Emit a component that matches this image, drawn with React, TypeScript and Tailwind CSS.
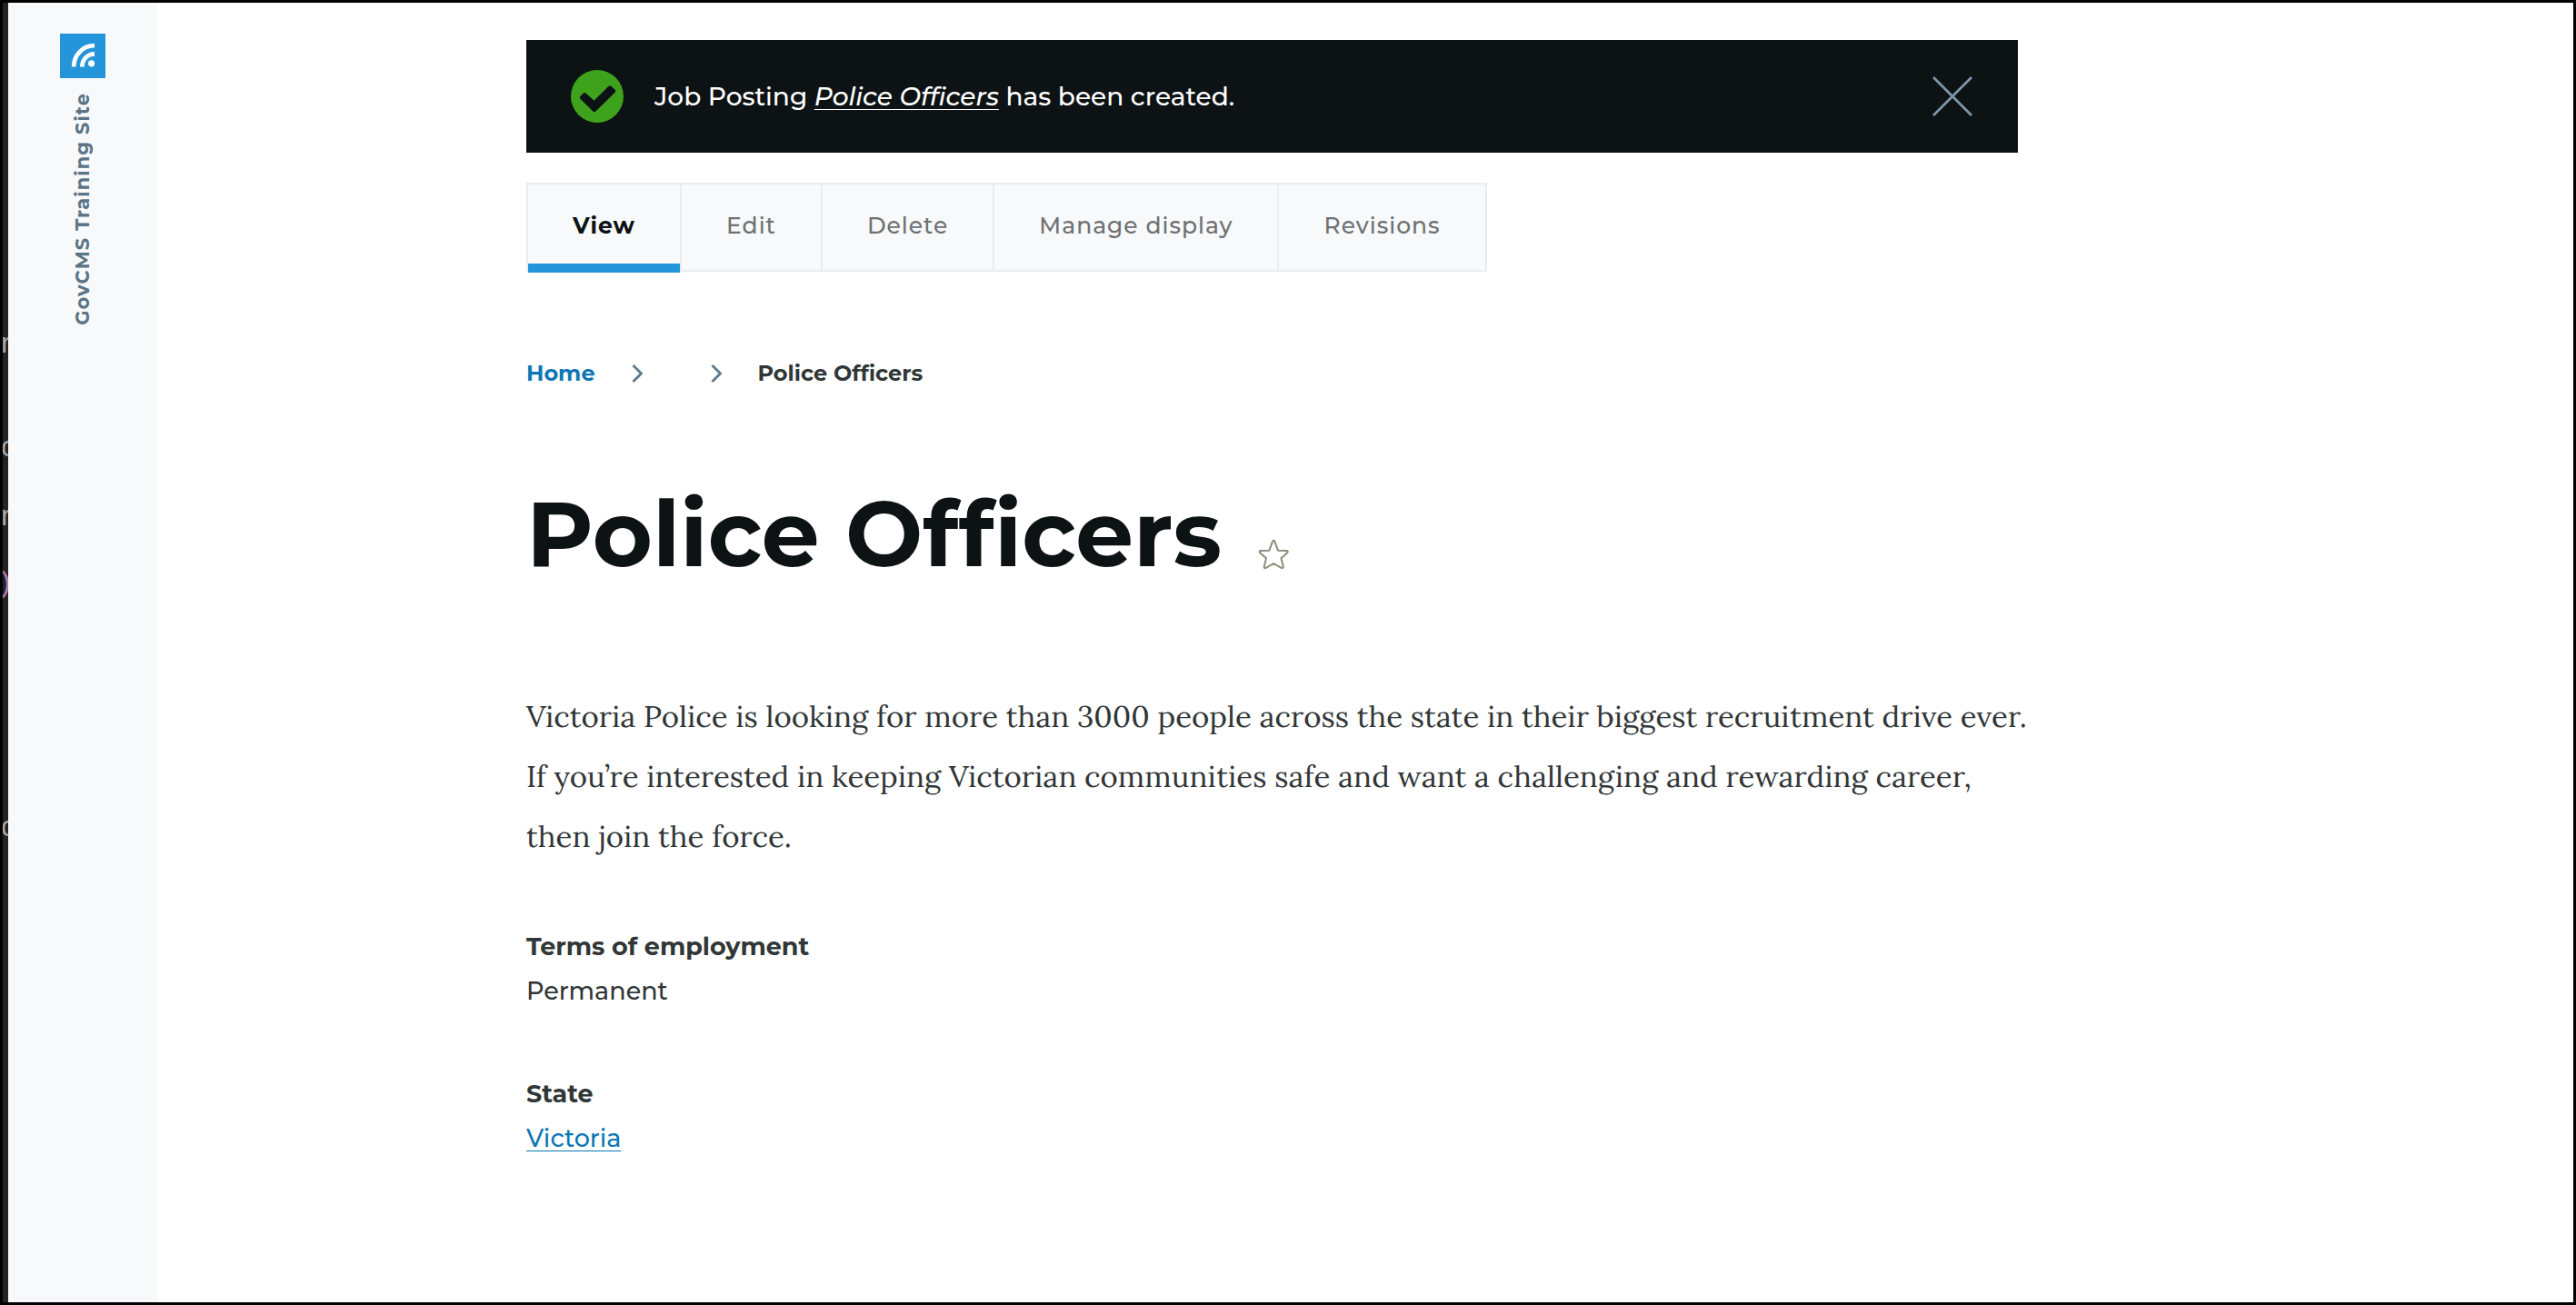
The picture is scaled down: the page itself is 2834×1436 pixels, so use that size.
import { useState } from 'react';

const tabs = ['View', 'Edit', 'Delete', 'Manage display', 'Revisions'];

function Chevron() {
  return (
    <svg aria-hidden="true" className="h-5 w-3 shrink-0" viewBox="0 0 12 20" fill="none" stroke="#5c7a8c" strokeWidth="2.8">
      <path d="M1.5 1 10.5 10 1.5 19" />
    </svg>
  );
}

function CheckBadge() {
  return (
    <svg aria-hidden="true" className="size-[58px] shrink-0" viewBox="0 0 58 58">
      <circle cx="29" cy="29" r="29" fill="#3fa21c" />
      <path
        d="M11.8 30.4 15.2 27 25.6 36.4 43 19.3 47.2 23.2 25.7 44.2Z"
        fill="#0d1214"
        stroke="#0d1214"
        strokeWidth="4"
        strokeLinejoin="round"
      />
    </svg>
  );
}

function Logo() {
  return (
    <svg aria-hidden="true" className="h-[49px] w-[50px]" viewBox="0 0 50 49" fill="none">
      <rect width="50" height="49" fill="#2494db" />
      <path d="M15.2 36.4V36A22.8 22.8 0 0 1 38 13.2" stroke="#fff" strokeWidth="4.8" />
      <path d="M24.4 36.4V36A13.6 13.6 0 0 1 38 22.4" stroke="#fff" strokeWidth="4.8" />
      <circle cx="34.6" cy="32.8" r="3.6" fill="#fff" />
    </svg>
  );
}

function Message({ onClose }: { onClose: () => void }) {
  return (
    <div role="status" className="flex min-h-[124px] items-center bg-[#0d1214] pr-[50px] pl-[49px] text-white">
      <CheckBadge />
      <p className="ml-[34px] grow text-[28px] leading-[48px]">
        Job Posting{' '}
        <a href="#police-officers" className="italic underline decoration-1 underline-offset-[4px]">
          Police Officers
        </a>{' '}
        has been created.
      </p>
      <button type="button" aria-label="Close message" onClick={onClose} className="cursor-pointer">
        <svg className="size-11" viewBox="0 0 44 44" fill="none" stroke="#7e96a9" strokeWidth="2.8">
          <path d="M1 1 43 43M43 1 1 43" />
        </svg>
      </button>
    </div>
  );
}

function EditorEdge() {
  return (
    <div
      aria-hidden="true"
      className="w-[6px] shrink-0 overflow-hidden bg-[#242322] pt-[358px] font-['Liberation_Sans',sans-serif] text-[32px] leading-8 text-[#a9a9a9]"
    >
      <div className="-ml-0.5">
        <div>r</div>
        <div className="mt-[82px]">c</div>
        <div className="mt-[44px]">r</div>
        <div className="mt-[41px] text-[#b07cae]">)</div>
        <div className="mt-[237px]">c</div>
      </div>
    </div>
  );
}

export default function App() {
  const [open, setOpen] = useState(true);
  return (
    <div className="flex min-h-screen border-[3px] border-black bg-white font-['Montserrat','Inter',sans-serif] font-medium text-[#313637]">
      <EditorEdge />
      <header className="flex w-[164px] shrink-0 flex-col items-center bg-[#f7f9fb] pt-[34px]">
        <a href="#home" className="flex flex-col items-center gap-4">
          <Logo />
          <span className="rotate-180 text-[21px] leading-8 font-bold tracking-wider text-[#5c7485] [writing-mode:vertical-rl]">
            GovCMS Training Site
          </span>
        </a>
      </header>
      <main className="grow pt-[41px] pr-12 pb-24 pl-[406px]">
        <div className="max-w-[1641px]">
          {open && <Message onClose={() => setOpen(false)} />}
          <nav aria-label="Primary tabs" className="mt-[33px]">
            <ul className="flex">
              {tabs.map((tab, i) => (
                <li key={tab} className={i === 0 ? '' : '-ml-0.5'}>
                  <a
                    href="#tab"
                    aria-current={i === 0 ? 'page' : undefined}
                    className={
                      i === 0
                        ? 'relative flex h-[98px] items-center border-2 border-[#e7edf1] bg-[#f7f9fb] px-[49px] pb-0.5 text-[25px] font-bold tracking-[1px] text-[#0d1214] after:absolute after:inset-x-0 after:-bottom-[3px] after:h-[10px] after:bg-[#2494db]'
                        : 'flex h-[98px] items-center border-2 border-[#e7edf1] bg-[#f7f9fb] px-[49px] pb-0.5 text-[25px] tracking-[1px] text-[#6e7172]'
                    }
                  >
                    {tab}
                  </a>
                </li>
              ))}
            </ul>
          </nav>
          <nav aria-label="Breadcrumb" className="mt-[96px]">
            <ol className="flex items-center text-[24px] leading-8 font-bold">
              <li className="flex items-center gap-10">
                <a href="#home" className="text-[#0d77b5]">Home</a>
                <Chevron />
              </li>
              <li className="ml-[75px] flex items-center">
                <Chevron />
              </li>
              <li className="ml-10">Police Officers</li>
            </ol>
          </nav>
          <div className="mt-[100px] flex items-end gap-10">
            <h1 className="text-[101px] leading-[120px] font-bold text-[#0d1214]">Police Officers</h1>
            <button type="button" aria-label="Add to shortcuts" className="mb-5 cursor-pointer">
              <svg className="size-[34px]" viewBox="0 0 34 34" fill="none" stroke="#8f8b7a" strokeWidth="2" strokeLinejoin="round">
                <path d="M16 2.8Q17.2 .8 18.4 2.8L22 12.7 31.5 13Q33.6 13.6 32.2 15.2L25.5 21.2 27.8 30.4Q27.8 32.8 25.6 31.8L17.2 27 8.8 31.8Q6.6 32.8 6.8 30.4L9 21.2 2.2 15.2Q.8 13.6 2.9 13L12.4 12.7Z" />
              </svg>
            </button>
          </div>
          <p className="mt-[108px] -mr-4 font-['Lora','Liberation_Serif',serif] text-[33px] leading-[66px] font-normal">
            Victoria Police is looking for more than 3000 people across the state in their biggest recruitment drive
            ever. If you’re interested in keeping Victorian communities safe and want a challenging and rewarding
            career, then join the force.
          </p>
          <dl className="mt-16 text-[27px] leading-[49px]">
            <dt className="font-bold">Terms of employment</dt>
            <dd>Permanent</dd>
            <dt className="mt-16 font-bold">State</dt>
            <dd>
              <a href="#victoria" className="text-[#0d77b5] underline decoration-1 underline-offset-[4px]">
                Victoria
              </a>
            </dd>
          </dl>
        </div>
      </main>
    </div>
  );
}
